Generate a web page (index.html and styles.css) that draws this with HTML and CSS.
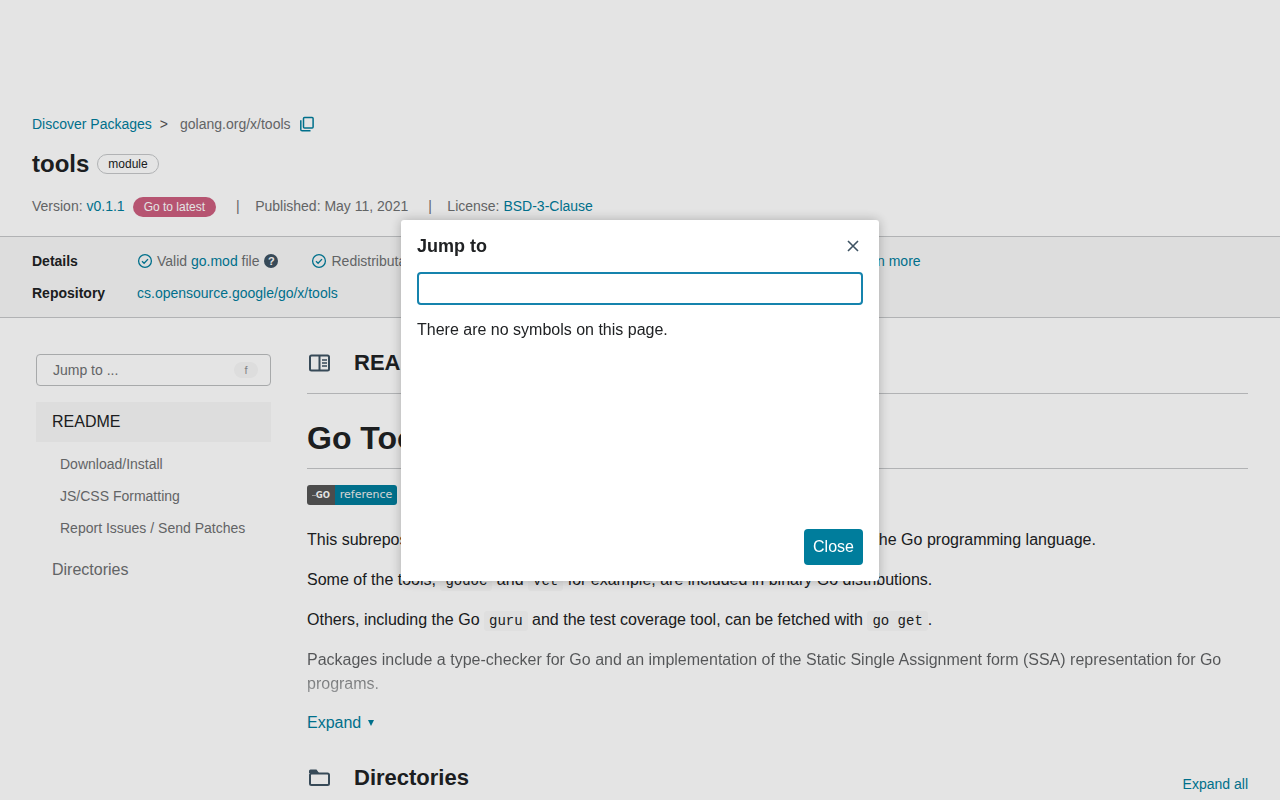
FILE: index.html
```html
<!DOCTYPE html>
<html lang="en">
  <head>
    <meta charset="UTF-8" />
    <meta name="viewport" content="width=device-width, initial-scale=1.0" />
    <title>tools · pkg.go.dev</title>
    <link rel="stylesheet" href="styles.css">
  </head>
  <body>
    <header class="unit-header">
      <nav class="crumbs">
        <a href="#">Discover Packages</a>
        <span class="crumbs-sep">&gt;</span>
        <span class="crumbs-path">golang.org/x/tools</span>
        <svg class="copy-icon" width="18" height="18" viewBox="0 0 18 18" fill="none" stroke="#007d9c" stroke-width="1.5">
          <rect x="5.5" y="2.6" width="9.6" height="10.4" rx="1" />
          <path d="M2.8 5.2V14.5a1.3 1.3 0 0 0 1.3 1.3H12.5" />
        </svg>
      </nav>
      <div class="title-row">
        <h1>tools</h1>
        <span class="chip">module</span>
      </div>
      <div class="info-row">
        <span>Version: <a href="#">v0.1.1</a></span>
        <span class="latest">Go to latest</span>
        <span class="info-sep">|</span>
        <span>Published: May 11, 2021</span>
        <span class="info-sep">|</span>
        <span>License: <a href="#">BSD-3-Clause</a></span>
      </div>
    </header>

    <section class="details">
      <div class="details-row">
        <strong>Details</strong>
        <span class="check">
          <svg width="16" height="16" viewBox="0 0 16 16" fill="none" stroke="#007d9c" stroke-width="1.3">
            <circle cx="8" cy="8" r="6.4" />
            <path d="M5 8.2l2.1 2.1 3.9-4.2" />
          </svg>
          <span>Valid <a href="#">go.mod</a> file</span>
          <span class="help">?</span>
        </span>
        <span class="check check-next">
          <svg width="16" height="16" viewBox="0 0 16 16" fill="none" stroke="#007d9c" stroke-width="1.3">
            <circle cx="8" cy="8" r="6.4" />
            <path d="M5 8.2l2.1 2.1 3.9-4.2" />
          </svg>
          <span>Redistributable license</span>
          <span class="help">?</span>
        </span>
        <span class="check check-next">
          <svg width="16" height="16" viewBox="0 0 16 16" fill="none" stroke="#007d9c" stroke-width="1.3">
            <circle cx="8" cy="8" r="6.4" />
            <path d="M5 8.2l2.1 2.1 3.9-4.2" />
          </svg>
          <span>Tagged version</span>
          <span class="help">?</span>
        </span>
        <span class="check check-next">
          <svg width="16" height="16" viewBox="0 0 16 16" fill="none" stroke="#007d9c" stroke-width="1.3">
            <circle cx="8" cy="8" r="6.4" />
            <path d="M5 8.2l2.1 2.1 3.9-4.2" />
          </svg>
          <span>Stable version</span>
          <span class="help">?</span>
        </span>
        <a class="learn" href="#">Learn more</a>
      </div>
      <div class="details-row">
        <strong>Repository</strong>
        <a href="#">cs.opensource.google/go/x/tools</a>
      </div>
    </section>

    <div class="layout">
      <aside class="side">
        <div class="jump-btn">
          <span>Jump to ...</span>
          <span class="key">f</span>
        </div>
        <div class="side-current">README</div>
        <ul class="side-list">
          <li>Download/Install</li>
          <li>JS/CSS Formatting</li>
          <li>Report Issues / Send Patches</li>
        </ul>
        <div class="side-top">Directories</div>
      </aside>

      <main class="content">
        <div class="sec-head sec-readme">
          <svg width="24" height="24" viewBox="0 0 24 24" fill="none" stroke="#3e5363" stroke-width="2">
            <rect x="2" y="4.5" width="19" height="15" rx="1.5" />
            <path d="M11.5 4.5v15" />
            <path d="M14 9h5M14 12h5M14 15h5" stroke-width="1.4" />
          </svg>
          <h2>README</h2>
        </div>
        <h1 class="readme-title">Go Tools</h1>
        <div class="badge">
          <span class="badge-go"><i></i>GO</span><span class="badge-ref">reference</span>
        </div>
        <p class="first">This subrepository holds the source for various packages and tools that support the Go programming language.</p>
        <p>Some of the tools, <code>godoc</code> and <code>vet</code> for example, are included in binary Go distributions.</p>
        <p>Others, including the Go <code>guru</code> and the test coverage tool, can be fetched with <code>go get</code>.</p>
        <p class="faded">Packages include a type-checker for Go and an implementation of the Static Single Assignment form (SSA) representation for Go programs.</p>
        <a class="expand" href="#">Expand <span class="caret"></span></a>
        <div class="sec-head sec-dirs">
          <svg width="24" height="24" viewBox="0 0 24 24" fill="none" stroke="#3e5363" stroke-width="2">
            <rect x="2" y="7.5" width="19" height="11.5" rx="1.5" />
            <path d="M1 7.5V5A1.5 1.5 0 0 1 2.5 3.5H8.5L11 7H1z" fill="#3e5363" stroke="none" />
          </svg>
          <h2>Directories</h2>
          <a class="expand-all" href="#">Expand all</a>
        </div>
      </main>
    </div>

    <div class="backdrop"></div>
    <div class="dialog">
      <div class="dialog-head">
        <h2>Jump to</h2>
        <svg width="12" height="12" viewBox="0 0 12 12" stroke="#3e5363" stroke-width="1.6">
          <path d="M1 1l10 10M11 1L1 11" />
        </svg>
      </div>
      <input class="dialog-input" type="text" />
      <p class="dialog-msg">There are no symbols on this page.</p>
      <div class="dialog-foot">
        <button class="close-btn">Close</button>
      </div>
    </div>
  </body>
</html>
```

FILE: styles.css
```css
html,
body {
  height: 800px;
  margin: 0;
  overflow: hidden;
}
body {
  background: #fff;
  color: #202224;
  font-family: "Liberation Sans", Arial, sans-serif;
  font-size: 16px;
}
a {
  color: #007d9c;
  text-decoration: none;
}
.unit-header {
  padding: 114px 32px 0 32px;
  height: 122px;
  color: #6e7072;
  font-size: 14px;
}
.crumbs {
  display: flex;
  align-items: center;
  height: 20px;
}
.crumbs-sep {
  margin: 0 12px 0 8px;
  color: #555;
}
.copy-icon {
  margin-left: 7px;
}
.title-row {
  display: flex;
  align-items: center;
  margin-top: 16px;
  height: 28px;
}
.title-row h1 {
  margin: 0;
  font-size: 24px;
  line-height: 28px;
  color: #202224;
}
.chip {
  margin-left: 8px;
  padding: 0 10px;
  height: 18px;
  line-height: 18px;
  border: 1px solid #c6c8ca;
  border-radius: 10px;
  font-size: 12px;
  color: #202224;
}
.info-row {
  display: flex;
  align-items: center;
  margin-top: 16px;
  height: 24px;
}
.latest {
  margin: 2px 0 0 8px;
  padding: 0 11px;
  height: 20px;
  line-height: 21px;
  border-radius: 10px;
  background: #cc5f7f;
  color: #fff;
  font-size: 12px;
}
.info-sep {
  margin: 0 15.5px 0 20px;
}
.details {
  box-sizing: border-box;
  height: 82px;
  padding: 8px 32px 0 32px;
  background: #f8f8f8;
  border-top: 1px solid #c6c8ca;
  border-bottom: 1px solid #c6c8ca;
  color: #6e7072;
  font-size: 14px;
}
.details-row {
  display: flex;
  align-items: center;
  height: 32px;
}
.details-row strong {
  width: 105px;
  color: #202224;
}
.check {
  display: flex;
  align-items: center;
  gap: 4px;
}
.check-next {
  margin-left: 33px;
}
.help {
  box-sizing: border-box;
  width: 14px;
  height: 14px;
  margin-left: 1px;
  border-radius: 50%;
  background: #3e5363;
  color: #fff;
  font-size: 11px;
  font-weight: bold;
  line-height: 14px;
  text-align: center;
}
.learn {
  margin-left: 30px;
}
.layout {
  display: flex;
  padding: 36px 32px 0 36px;
}
.side {
  flex: 0 0 235px;
  margin-right: 36px;
  color: #6e7072;
  font-size: 14px;
}
.jump-btn {
  box-sizing: border-box;
  display: flex;
  align-items: center;
  justify-content: space-between;
  height: 32px;
  padding: 0 12px 0 16px;
  border: 1px solid #bbbdbf;
  border-radius: 4px;
}
.key {
  width: 24px;
  height: 16px;
  border-radius: 8px;
  background: #f8f8f8;
  font-size: 11px;
  line-height: 16px;
  text-align: center;
  color: #909295;
}
.side-current {
  margin-top: 16px;
  height: 40px;
  padding-left: 16px;
  background: #f8f8f8;
  color: #202224;
  font-size: 16px;
  line-height: 40px;
}
.side-list {
  margin: 6px 0 0 0;
  padding: 0 0 0 24px;
  list-style: none;
}
.side-list li {
  height: 32px;
  line-height: 32px;
}
.side-top {
  margin-top: 9px;
  padding-left: 16px;
  font-size: 16px;
  line-height: 34px;
}
.content {
  flex: 1;
  min-width: 0;
  font-size: 16px;
}
.sec-head {
  display: flex;
  align-items: center;
}
.sec-head h2 {
  margin: 0 0 0 22px;
  font-size: 22px;
  line-height: 28px;
}
.sec-readme {
  box-sizing: border-box;
  height: 40px;
  padding-bottom: 21px;
  border-bottom: 1px solid #c6c8ca;
}
.sec-readme svg,
.sec-dirs svg {
  margin-left: 1px;
}
.readme-title {
  margin: 24px 0 0 0;
  padding-bottom: 12px;
  height: 38px;
  font-size: 32px;
  line-height: 40px;
  border-bottom: 1px solid #c6c8ca;
}
.badge {
  display: flex;
  margin-top: 16px;
  height: 20px;
  width: 90px;
  border-radius: 3px;
  overflow: hidden;
  font-family: "DejaVu Sans", sans-serif;
  font-size: 11px;
  line-height: 20px;
}
.badge-go {
  flex: 0 0 28px;
  position: relative;
  padding-right: 5px;
  box-sizing: border-box;
  background: #555;
  color: #fff;
  font-size: 8.5px;
  font-weight: bold;
  text-align: right;
}
.badge-go i {
  display: block;
  position: absolute;
  left: 5px;
  top: 10px;
  width: 5px;
  height: 1px;
  background: #aaa;
}
.badge-ref {
  flex: 1;
  background: #007d9c;
  color: #eee;
  text-align: center;
}
.content p {
  margin: 16px 0 0 0;
  line-height: 24px;
}
.content p.first {
  margin-top: 23px;
}
code {
  padding: 2px 5px;
  background: #fafafa;
  border-radius: 3px;
  font-family: "Liberation Mono", monospace;
  font-size: 14px;
  line-height: 16px;
}
.content p.faded {
  background: linear-gradient(#5e6062, #5e6062 40%, #b0b2b4);
  -webkit-background-clip: text;
  background-clip: text;
  color: transparent;
}
.expand {
  display: inline-flex;
  align-items: center;
  margin-top: 15px;
  line-height: 24px;
}
.caret {
  margin-left: 7px;
  border-left: 3.5px solid transparent;
  border-right: 3.5px solid transparent;
  border-top: 6px solid #007d9c;
}
.sec-dirs {
  margin-top: 29px;
}
.expand-all {
  margin-left: auto;
  align-self: flex-end;
  font-size: 14px;
}
.backdrop {
  position: fixed;
  top: 0;
  left: 0;
  right: 0;
  bottom: 0;
  background: rgba(0, 0, 0, 0.105);
}
.dialog {
  position: fixed;
  top: 220px;
  left: 401px;
  box-sizing: border-box;
  display: flex;
  flex-direction: column;
  width: 478px;
  height: 361px;
  padding: 16px;
  background: #fff;
  border-radius: 3px;
  box-shadow: 0 0 12px rgba(0, 0, 0, 0.25);
}
.dialog-head {
  display: flex;
  align-items: center;
  justify-content: space-between;
  height: 20px;
  padding-right: 4px;
}
.dialog-head h2 {
  margin: 0;
  font-size: 18px;
  line-height: 20px;
}
.dialog-input {
  box-sizing: border-box;
  width: 100%;
  height: 33px;
  margin-top: 16px;
  border: 2px solid #1583ad;
  border-radius: 4px;
  outline: none;
  background: #fff;
}
.dialog-msg {
  margin: 15px 0 0 0;
  line-height: 20px;
}
.dialog-foot {
  display: flex;
  justify-content: flex-end;
  margin-top: auto;
}
.close-btn {
  height: 36px;
  width: 59px;
  padding: 0;
  border: 0;
  border-radius: 4px;
  background: #007d9c;
  color: #fff;
  font-family: inherit;
  font-size: 16px;
}
```
